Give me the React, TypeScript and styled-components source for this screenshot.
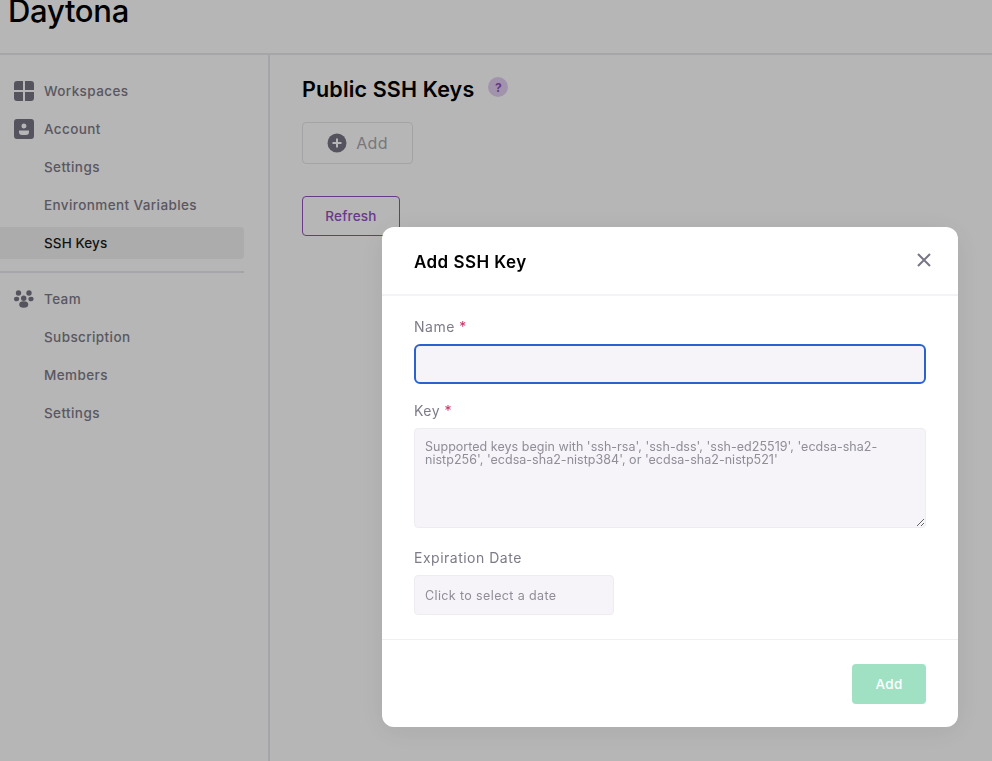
import styled, { createGlobalStyle } from 'styled-components'

const GlobalStyle = createGlobalStyle`
  html, body {
    margin: 0;
    padding: 0;
    background: #fff;
  }
  body {
    font-family: "Inter", "Liberation Sans", sans-serif;
    overflow: hidden;
  }
  * {
    box-sizing: border-box;
  }
`

const Page = styled.div`
  width: 992px;
  height: 761px;
  display: flex;
  flex-direction: column;
  overflow: hidden;
`

const Header = styled.header`
  height: 55px;
  flex-shrink: 0;
  border-bottom: 2px solid #e8e8ee;
  padding-left: 8px;
  overflow: hidden;
`

const Logo = styled.div`
  margin-top: -8px;
  font-size: 31px;
  line-height: 38px;
  font-weight: 500;
  letter-spacing: -0.3px;
  color: #000;
`

const Content = styled.div`
  flex: 1;
  display: flex;
`

const Sidebar = styled.nav`
  width: 270px;
  flex-shrink: 0;
  border-right: 2px solid #e8e8ee;
  padding: 20px 24px 0 0;
  display: flex;
  flex-direction: column;
  gap: 6px;
`

const NavItem = styled.div<{ $active?: boolean }>`
  height: 32px;
  display: flex;
  align-items: center;
  gap: 10px;
  padding-left: 14px;
  border-radius: 0 4px 4px 0;
  font-size: 13.5px;
  font-weight: 500;
  letter-spacing: ${(p) => (p.$active ? '0.1px' : '0.4px')};
  color: ${(p) => (p.$active ? '#1a1a1a' : '#7e7b88')};
  background: ${(p) => (p.$active ? '#f1f1f1' : 'transparent')};
`

const NavIcon = styled.svg`
  width: 20px;
  height: 20px;
  flex-shrink: 0;
  fill: #787584;
`

const NavSpacer = styled.span`
  width: 20px;
  flex-shrink: 0;
`

const NavDivider = styled.div`
  height: 2px;
  margin: 6px 0 4px;
  background: #e8e8ee;
`

const Main = styled.main`
  flex: 1;
  padding: 20px 0 0 32px;
`

const TitleRow = styled.div`
  display: flex;
  align-items: center;
  gap: 14px;
  height: 28px;
`

const Title = styled.h1`
  margin: 0;
  font-size: 21.5px;
  line-height: 28px;
  font-weight: 600;
  letter-spacing: 0.15px;
  color: #000;
`

const HelpBadge = styled.span`
  width: 20px;
  height: 20px;
  margin-top: -4px;
  border-radius: 50%;
  background: #e3cff2;
  color: #8c4fbd;
  font-size: 12px;
  font-weight: 700;
  display: flex;
  align-items: center;
  justify-content: center;
`

const GhostButton = styled.button`
  display: flex;
  align-items: center;
  justify-content: center;
  gap: 9px;
  width: 111px;
  height: 42px;
  margin-top: 19px;
  background: transparent;
  border: 1px solid #e6e6ea;
  border-radius: 4px;
  font: inherit;
  font-size: 16px;
  letter-spacing: 0.3px;
  color: #a8a8ac;
`

const PlusIcon = styled.svg`
  width: 20px;
  height: 20px;
`

const OutlineButton = styled.button`
  display: block;
  width: 98px;
  height: 40px;
  margin-top: 32px;
  background: transparent;
  border: 1px solid #9450c2;
  border-radius: 4px;
  font: inherit;
  font-size: 13.5px;
  font-weight: 500;
  letter-spacing: 0.2px;
  color: #9450c2;
`

const Overlay = styled.div`
  position: fixed;
  inset: 0;
  background: rgba(0, 0, 0, 0.286);
  display: flex;
  justify-content: flex-end;
  align-items: flex-start;
  padding: 227px 34px 0 0;
`

const Modal = styled.div`
  width: 576px;
  height: 500px;
  background: #fff;
  border-radius: 12px;
  box-shadow: 0 4px 30px rgba(40, 30, 50, 0.08);
  display: flex;
  flex-direction: column;
`

const ModalHeader = styled.div`
  height: 69px;
  flex-shrink: 0;
  display: flex;
  align-items: center;
  justify-content: space-between;
  padding: 3px 26px 0 32px;
  border-bottom: 2px solid #f3f3f5;
`

const ModalTitle = styled.h2`
  margin: 0;
  font-size: 17px;
  font-weight: 600;
  letter-spacing: 0.45px;
  color: #000;
`

const CloseIcon = styled.svg`
  width: 16px;
  height: 16px;
  stroke: #787584;
  stroke-width: 2;
  fill: none;
  margin-top: -5px;
`

const ModalBody = styled.div`
  flex: 1;
  padding: 21px 32px 0;
  display: flex;
  flex-direction: column;
`

const Label = styled.label<{ $gap?: number }>`
  display: block;
  height: 20px;
  margin-top: ${(p) => p.$gap ?? 0}px;
  margin-bottom: 7px;
  font-size: 14px;
  line-height: 20px;
  letter-spacing: 0.5px;
  color: #7e7b88;
`

const Required = styled.span`
  color: #cc2a66;
`

const NameInput = styled.input`
  display: block;
  width: 100%;
  height: 40px;
  background: #f6f4f8;
  border: 2px solid #2a62cf;
  border-radius: 6px;
  outline: none;
`

const KeyArea = styled.textarea`
  display: block;
  width: 100%;
  height: 100px;
  padding: 11px 10px;
  background: #f6f4f8;
  border: 1px solid #eeecf0;
  border-radius: 4px;
  outline: none;
  font-family: inherit;
  font-size: 12.5px;
  line-height: 13px;
  letter-spacing: 0.03px;
  &::placeholder {
    color: #8f8d97;
    opacity: 1;
  }
`

const DateInput = styled.input`
  display: block;
  width: 200px;
  height: 40px;
  padding: 0 10px;
  background: #f6f4f8;
  border: 1px solid #eeecf0;
  border-radius: 4px;
  outline: none;
  font-family: inherit;
  font-size: 12.5px;
  letter-spacing: 0.38px;
  &::placeholder {
    color: #8f8d97;
    opacity: 1;
  }
`

const ModalFooter = styled.div`
  height: 88px;
  flex-shrink: 0;
  display: flex;
  justify-content: flex-end;
  padding: 24px 32px 0 0;
  border-top: 1px solid #f0f0f2;
`

const SubmitButton = styled.button`
  width: 74px;
  height: 40px;
  background: #a0e1c4;
  border: none;
  border-radius: 4px;
  font: inherit;
  font-size: 13.5px;
  font-weight: 500;
  letter-spacing: 0.3px;
  color: #fff;
`

const GridIcon = () => (
  <NavIcon viewBox="0 0 20 20">
    <path d="M3 0h6v9H0V3a3 3 0 0 1 3-3zM11 0h6a3 3 0 0 1 3 3v6h-9zM0 11h9v9H3a3 3 0 0 1-3-3zM11 11h9v6a3 3 0 0 1-3 3h-6z" />
  </NavIcon>
)

const AccountIcon = () => (
  <NavIcon viewBox="0 0 20 20">
    <path
      fillRule="evenodd"
      d="M3 0h14a3 3 0 0 1 3 3v14a3 3 0 0 1-3 3H3a3 3 0 0 1-3-3V3a3 3 0 0 1 3-3zm7 4.500a2.500 2.500 0 1 0 0 5 2.500 2.500 0 0 0 0-5zM5 11.500v1.500a3 3 0 0 0 3 3h4a3 3 0 0 0 3-3v-1.500z"
    />
  </NavIcon>
)

const TeamIcon = () => (
  <NavIcon viewBox="0 0 20 20">
    <circle cx="4.500" cy="4" r="2.700" />
    <circle cx="15" cy="4" r="2.700" />
    <circle cx="9.700" cy="9.300" r="2.700" />
    <ellipse cx="2.600" cy="10" rx="2.600" ry="2.300" />
    <ellipse cx="17" cy="10" rx="2.600" ry="2.300" />
    <ellipse cx="9.700" cy="15.500" rx="4.500" ry="3.300" />
  </NavIcon>
)

export default function App() {
  return (
    <>
      <GlobalStyle />
      <Page>
        <Header>
          <Logo>Daytona</Logo>
        </Header>
        <Content>
          <Sidebar>
            <NavItem><GridIcon />Workspaces</NavItem>
            <NavItem><AccountIcon />Account</NavItem>
            <NavItem><NavSpacer />Settings</NavItem>
            <NavItem><NavSpacer />Environment Variables</NavItem>
            <NavItem $active><NavSpacer />SSH Keys</NavItem>
            <NavDivider />
            <NavItem><TeamIcon />Team</NavItem>
            <NavItem><NavSpacer />Subscription</NavItem>
            <NavItem><NavSpacer />Members</NavItem>
            <NavItem><NavSpacer />Settings</NavItem>
          </Sidebar>
          <Main>
            <TitleRow>
              <Title>Public SSH Keys</Title>
              <HelpBadge>?</HelpBadge>
            </TitleRow>
            <GhostButton>
              <PlusIcon viewBox="0 0 20 20">
                <circle cx="10" cy="10" r="9.500" fill="#787584" />
                <path d="M10 5.500v9M5.500 10h9" stroke="#fff" strokeWidth="2" />
              </PlusIcon>
              Add
            </GhostButton>
            <OutlineButton>Refresh</OutlineButton>
          </Main>
        </Content>
      </Page>
      <Overlay>
        <Modal>
          <ModalHeader>
            <ModalTitle>Add SSH Key</ModalTitle>
            <CloseIcon viewBox="0 0 16 16">
              <path d="M2 2l12 12M14 2L2 14" />
            </CloseIcon>
          </ModalHeader>
          <ModalBody>
            <Label>Name <Required>*</Required></Label>
            <NameInput />
            <Label $gap={17}>Key <Required>*</Required></Label>
            <KeyArea placeholder="Supported keys begin with 'ssh-rsa', 'ssh-dss', 'ssh-ed25519', 'ecdsa-sha2-nistp256', 'ecdsa-sha2-nistp384', or 'ecdsa-sha2-nistp521'" />
            <Label $gap={20}>Expiration Date</Label>
            <DateInput placeholder="Click to select a date" />
          </ModalBody>
          <ModalFooter>
            <SubmitButton>Add</SubmitButton>
          </ModalFooter>
        </Modal>
      </Overlay>
    </>
  )
}
